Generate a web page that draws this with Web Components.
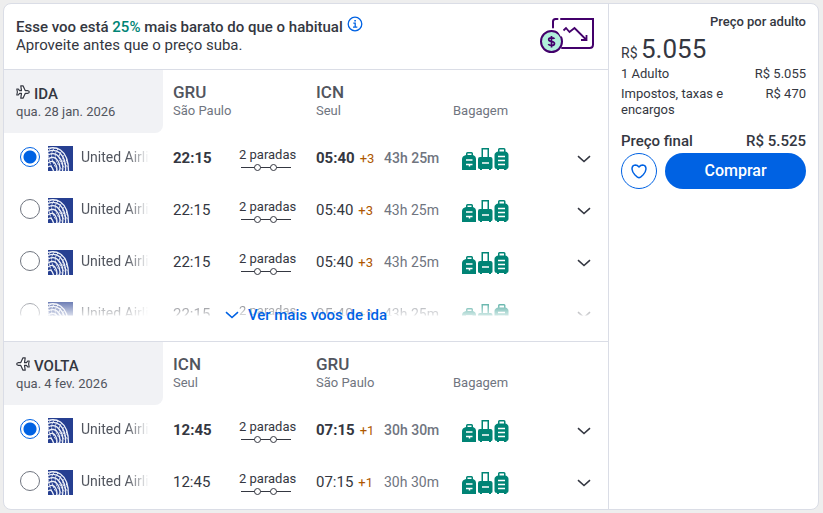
<!DOCTYPE html>
<html lang="pt-BR">
<head>
<meta charset="utf-8">
<meta name="viewport" content="width=device-width, initial-scale=1">
<title>Voo GRU – ICN</title>
<style>
  body { margin: 0; padding: 3px 4px 3px 3px; background: #eee; color: #343741; font-family: Roboto, "Open Sans", sans-serif; font-size: 15px; line-height: 18px; }
  deal-banner em { font-style: normal; color: #008475; }
</style>
</head>
<body>
<flight-card>
  <deal-banner slot="main">
    <strong slot="title">Esse voo está <em>25%</em> mais barato do que o habitual</strong>
    Aproveite antes que o preço suba.
  </deal-banner>
  <flight-leg slot="main" name="ida" label="IDA" date="qua. 28 jan. 2026" from="GRU" from-city="São Paulo" to="ICN" to-city="Seul" depart="22:15" arrive="05:40" days="+3" duration="43h 25m" rows="4" more="Ver mais voos de ida"></flight-leg>
  <flight-leg slot="main" name="volta" label="VOLTA" date="qua. 4 fev. 2026" from="ICN" from-city="Seul" to="GRU" to-city="São Paulo" depart="12:45" arrive="07:15" days="+1" duration="30h 30m" rows="2"></flight-leg>
  <price-panel slot="side"></price-panel>
</flight-card>

<script>
const define = (name, html, setup) => customElements.define(name, class extends HTMLElement {
  connectedCallback() {
    if (this.shadowRoot) return;
    const root = this.attachShadow({ mode: 'open' });
    root.innerHTML = typeof html === 'function' ? html(this) : html;
    if (setup) setup(root, this);
  }
});

define('flight-card', `
<style>
  :host { display: flex; background: #fff; border: 1px solid #dadde6; border-radius: 8px; overflow: hidden; }
  main { flex: 1; min-width: 0; }
  aside { flex: 0 0 209px; border-left: 1px solid #dadde6; }
</style>
<main><slot name="main"></slot></main>
<aside><slot name="side"></slot></aside>`);

define('deal-banner', `
<style>
  :host { display: flex; justify-content: space-between; align-items: center; height: 65px; padding: 0 12px; border-bottom: 1px solid #dadde6; }
  ::slotted(strong) { font-weight: 500; }
  .text { padding-bottom: 2px; }
  .top { display: flex; gap: 4px; }
  button { all: unset; cursor: pointer; width: 16px; height: 16px; margin-top: -2px; }
  svg { display: block; }
</style>
<div class="text">
  <div class="top"><slot name="title"></slot>
    <button aria-label="Mais informações"><svg width="16" height="16" viewBox="0 0 16 16" fill="none" stroke="#0062e3" stroke-width="1.3"><circle cx="8" cy="8" r="6.8"/><path d="M6.3 7.2H8.2V11M6 11.1H10.3" /><path d="M7.3 4.8H8.9" stroke-width="1.6"/></svg></button>
  </div>
  <slot></slot>
</div>
<svg width="56" height="37" viewBox="0 0 56 37" fill="none" stroke="#43006b" stroke-width="2" aria-hidden="true">
  <path d="M13 9.500V3.500Q13 1 15.500 1H17.500M21 1H53V26.500Q53 30 49.500 30H22" stroke-linecap="round"/>
  <path d="M23.500 12.500L26 10L29.500 14L34.500 10L46 21.500M46.500 17V22H41" stroke-width="1.8"/>
  <circle cx="11.500" cy="23.500" r="10.500" fill="#b1efdc"/>
  <path d="M19 13L22 18" stroke="#fff" stroke-width="2.500"/>
  <path d="M14.500 20.800Q14 19.800 11.500 19.800Q8.500 19.800 8.700 21.700Q8.900 23.300 11.500 23.500Q14.500 23.800 14.500 25.600Q14.300 27.500 11.500 27.500Q8.900 27.500 8.400 26M11.500 18V29.500" stroke-width="1.700"/>
</svg>`);

define('airline-logo', `
<style>:host { display: block; width: 25px; height: 25px; flex: none; } svg { display: block; }</style>
<svg width="25" height="25" viewBox="0 0 25 25" role="img" aria-label="United Airlines">
  <rect width="25" height="25" fill="#263f91"/>
  <g fill="none" stroke="#eef1f8" stroke-width="1.300">
    <path d="M0 2.500Q7 .5 12.500 4Q20.500 9.500 20.500 25"/>
    <path d="M0 5.500Q7 2.500 12 7Q18.500 14 17.500 25"/>
    <path d="M0 9Q7 5.500 11 11Q16 17 14.500 25"/>
    <path d="M0 13Q6.500 9 10 15Q13 20 11.500 25"/>
    <path d="M0 17Q5.500 13 8 19Q9.500 22 8.500 25"/>
    <path d="M0 21Q3.500 18 5.500 25"/>
    <path d="M3 2Q-.5 5 .5 10Q1.500 18 6 25M6.500 2Q2 7 4.500 14Q6 20 10.500 25M10 3Q5.500 8 8.500 15Q10.500 20 14 23.500M13.500 5.500Q9.500 10 12.500 16Q14.500 20 18 22.500M16.500 8.500Q13.500 12 16 17Q17.500 19.500 20 21M19 13Q17.500 14.500 20 18" stroke-width="1" stroke-dasharray="2.200 .8"/>
  </g>
</svg>`);

define('stops-line', `
<style>
  :host { display: block; padding-top: 2px; font-size: 13px; line-height: 16px; }
  svg { display: block; margin-left: 2px; }
</style>
<span><slot></slot></span>
<svg width="50" height="8" viewBox="0 0 50 8" fill="#fff" stroke="#343741" aria-hidden="true"><path d="M0 4.500H50"/><circle cx="16.500" cy="4.500" r="3"/><circle cx="32.500" cy="4.500" r="3"/></svg>`);

define('bag-icons', `
<style>:host { display: block; } svg { display: block; }</style>
<svg width="47" height="23" viewBox="0 0 47 23" fill="#008475" role="img" aria-label="Bagagem incluída">
  <path d="M4 7V5.500Q4 4 5.500 4H9.500Q11 4 11 5.500V7Q14 8 14 11V22H0V11Q0 8 4 7ZM5.500 5.500V7H9.500V5.500Z" fill-rule="evenodd"/>
  <path d="M4 12H10.500M4 16.500H10.500M7.500 16.500V18.500" stroke="#fff" stroke-width="1.500"/>
  <path d="M19.500 9V0H27V9H28.500Q30.500 9 30.500 11V19.500Q30.500 21 29 21V22H27V21H20V22H18V21Q16 21 16 19.500V11Q16 9 18 9ZM21 1.500V9H25.500V1.500Z" fill-rule="evenodd"/>
  <path d="M20 15H27" stroke="#fff" stroke-width="1.500"/>
  <path d="M36 3.500V1.500Q36 0 37.500 0H42Q43.500 0 43.500 1.500V3.500Q46.500 4.500 46.500 7V19Q46.500 21 44.500 21V22H42V21H37V22H35V21Q32.500 21 32.500 19V7Q32.500 4.500 36 3.500ZM37.500 1.500V3.500H42V1.500Z" fill-rule="evenodd"/>
  <path d="M36 8.500H43M36 12.500H43M36 16.500H43" stroke="#fff" stroke-width="1.500"/>
</svg>`);

define('chevron-icon', `
<style>:host { display: inline-block; } svg { display: block; }</style>
<svg width="14" height="8" viewBox="0 0 14 8" fill="none" stroke="currentColor" stroke-width="1.600" aria-hidden="true"><path d="M1 1.200L7 6.500L13 1.200"/></svg>`);

const option = (el, i) => {
  const a = n => el.getAttribute(n);
  const id = a('name') + i;
  return `<li>
    <div class="airline"><input type="radio" name="${a('name')}" id="${id}" ${i ? '' : 'checked'}><airline-logo></airline-logo><label for="${id}">United Airlines</label></div>
    <div class="depart"><span class="time">${a('depart')}</span><stops-line>2 paradas</stops-line></div>
    <div class="arrive"><span><span class="time">${a('arrive')}</span><small>${a('days')}</small></span><span class="duration">${a('duration')}</span></div>
    <div class="bags"><bag-icons></bag-icons><button class="toggle" aria-label="Mostrar detalhes"><chevron-icon></chevron-icon></button></div>
  </li>`;
};

define('flight-leg', el => {
  const a = n => el.getAttribute(n);
  return `
<style>
  :host { display: block; --cols: 169fr 143fr 137fr 155fr; }
  :host([more]) { border-bottom: 1px solid #dadde6; }
  header, li { display: grid; grid-template-columns: var(--cols); }
  header { height: 63px; font-size: 13px; line-height: 18px; color: #70757f; }
  .leg { box-sizing: border-box; margin-right: 10px; padding: 15px 12px 0; background: #f1f2f5; border-radius: 0 0 8px 0; color: #51555e; }
  h2 { display: flex; align-items: center; gap: 4px; margin: 0; font-size: 15px; line-height: 18px; font-weight: 500; color: #343741; }
  h2 svg { margin-top: -4px; }
  .place { padding-top: 13px; }
  .place b { display: block; font-size: 17px; line-height: 19px; font-weight: 500; color: #51555e; }
  .bagtitle { padding-top: 32px; }
  .list { position: relative; }
  ul { list-style: none; margin: 0; padding: 0; }
  li { height: 52px; }
  :host([more]) li:last-child { -webkit-mask-image: linear-gradient(#000 4px, #0003 26px, transparent 27px); mask-image: linear-gradient(#000 4px, #0003 26px, transparent 27px); }
  li > div { display: flex; align-items: center; min-width: 0; padding-bottom: 2px; }
  .airline { padding-left: 16px; gap: 8px; }
  input { appearance: none; flex: none; box-sizing: border-box; width: 20px; height: 20px; margin: 0; border: 1px solid #70757f; border-radius: 50%; background: #fff; }
  li .airline { padding-bottom: 4px; }
  airline-logo { margin-top: 2px; }
  input:checked { border: 1px solid #0062e3; background: radial-gradient(circle, #0062e3 6px, #fff 7px); }
  label { width: 68px; overflow: hidden; white-space: nowrap; font-size: 14px; color: #51555e; -webkit-mask-image: linear-gradient(90deg, #000 46px, transparent); mask-image: linear-gradient(90deg, #000 46px, transparent); }
  .depart .time { width: 66px; }
  .arrive > span:first-child { width: 68px; }
  small { margin-left: 5px; font-size: 13px; color: #ae5700; }
  .duration { font-size: 14px; color: #70757f; white-space: nowrap; }
  li:has(:checked) .time { font-weight: 700; }
  li:has(:checked) .duration { font-weight: 500; }
  li .bags { justify-content: space-between; padding: 0 12px 0 9px; }
  button { all: unset; cursor: pointer; display: flex; align-items: center; justify-content: center; }
  .toggle { width: 24px; height: 24px; }
  .more { position: absolute; left: 0; right: 0; bottom: 14px; gap: 9px; color: #0062e3; font-weight: 500; line-height: 24px; }
</style>
<header>
  <div class="leg"><h2><svg width="14" height="14" viewBox="0 0 14 14" fill="#fff" stroke="#343741" stroke-width="1.200" stroke-linejoin="round" aria-hidden="true"><path ${a('more') ? '' : 'transform="matrix(-1 0 0 1 14 0)"'} d="M.8 4H2.300L3.500 5.700H5.500L4.800 .8H7L9.200 5.600H11.500Q13.300 5.800 13.300 7T11.500 8.400H9.200L7 13.200H4.800L5.500 8.300H3.500L2.300 10H.8L1.400 7Z"/></svg>${a('label')}</h2>${a('date')}</div>
  <div class="place"><b>${a('from')}</b>${a('from-city')}</div>
  <div class="place"><b>${a('to')}</b>${a('to-city')}</div>
  <div class="bagtitle">Bagagem</div>
</header>
<div class="list">
  <ul>${Array.from({ length: +a('rows') }, (_, i) => option(el, i)).join('')}</ul>
  ${a('more') ? `<button class="more"><chevron-icon></chevron-icon>${a('more')}</button>` : ''}
</div>`;
});

define('price-panel', `
<style>
  :host { display: block; padding: 9px 12px; font-size: 13px; line-height: 16px; }
  .per { text-align: right; font-weight: 500; line-height: 18px; }
  .big { font-size: 14px; line-height: 30px; margin: 3px 0 -2px; }
  .big span { font-size: 26px; }
  dl { margin: 0; }
  dl div { display: flex; justify-content: space-between; margin-bottom: 4px; }
  dt { max-width: 110px; }
  dd { margin: 0; }
  dl .total { margin: 14px 0 3px; font-size: 15px; line-height: 18px; font-weight: 500; }
  .actions { display: flex; gap: 8px; }
  button { box-sizing: border-box; height: 36px; padding: 0; border: 0; border-radius: 18px; font: 500 16px/20px Roboto, sans-serif; cursor: pointer; }
  .save { width: 36px; background: #fff; border: 1px solid #0062e3; display: grid; place-items: center; }
  .buy { flex: 1; background: #0062e3; color: #fff; }
</style>
<div class="per">Preço por adulto</div>
<div class="big">R$ <span>5.055</span></div>
<dl>
  <div><dt>1 Adulto</dt><dd>R$ 5.055</dd></div>
  <div><dt>Impostos, taxas e encargos</dt><dd>R$ 470</dd></div>
  <div class="total"><dt>Preço final</dt><dd>R$ 5.525</dd></div>
</dl>
<div class="actions">
  <button class="save" aria-label="Salvar"><svg width="16" height="15" viewBox="0 0 16 15" fill="none" stroke="#0062e3" stroke-width="1.500" stroke-linejoin="round"><path d="M8 3Q6.500 1 4.300 1Q1 1.200 1 5Q1.200 8 3.800 10.700L6.500 13.200Q8 14.300 9.500 13.200L12.200 10.700Q14.800 8 15 5Q15 1.200 11.700 1Q9.500 1 8 3Z"/></svg></button>
  <button class="buy">Comprar</button>
</div>`);
</script>
</body>
</html>
